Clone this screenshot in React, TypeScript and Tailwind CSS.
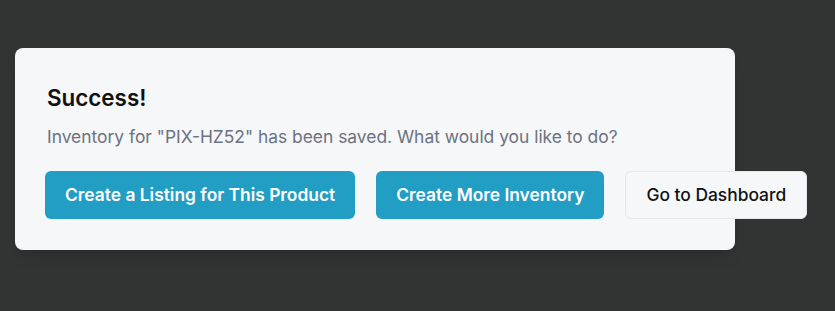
import React from 'react';

const App: React.FC = () => {
  const productCode = 'PIX-HZ52';

  return (
    <div className="min-h-screen bg-[#323433] pt-12 pl-[15px] font-['Inter',sans-serif]">
      {/* Success card */}
      <div className="w-[720px] rounded-lg bg-[#f6f7f9] px-8 pt-8 pb-[31px] shadow-lg">
        <h2 className="text-[22.4px] font-semibold leading-[35px] text-[#111111]">Success!</h2>
        <p className="mt-[9px] text-[17.4px] leading-[25px] text-[#6b7280]">
          Inventory for "{productCode}" has been saved. What would you like to do?
        </p>
        <div className="mt-[22px] flex gap-[21px] -ml-[2px]">
          <button className="h-12 shrink-0 rounded-md bg-[#229dc4] px-5 text-[17.4px] font-semibold text-white">
            Create a Listing for This Product
          </button>
          <button className="h-12 shrink-0 rounded-md bg-[#229dc4] px-5 text-[17.4px] font-semibold text-white">
            Create More Inventory
          </button>
          <button className="h-12 shrink-0 rounded-md border border-[#e5e7eb] bg-[#f6f7f9] px-5 text-[17.4px] font-medium text-[#111111]">
            Go to Dashboard
          </button>
        </div>
      </div>
    </div>
  );
};

export default App;
